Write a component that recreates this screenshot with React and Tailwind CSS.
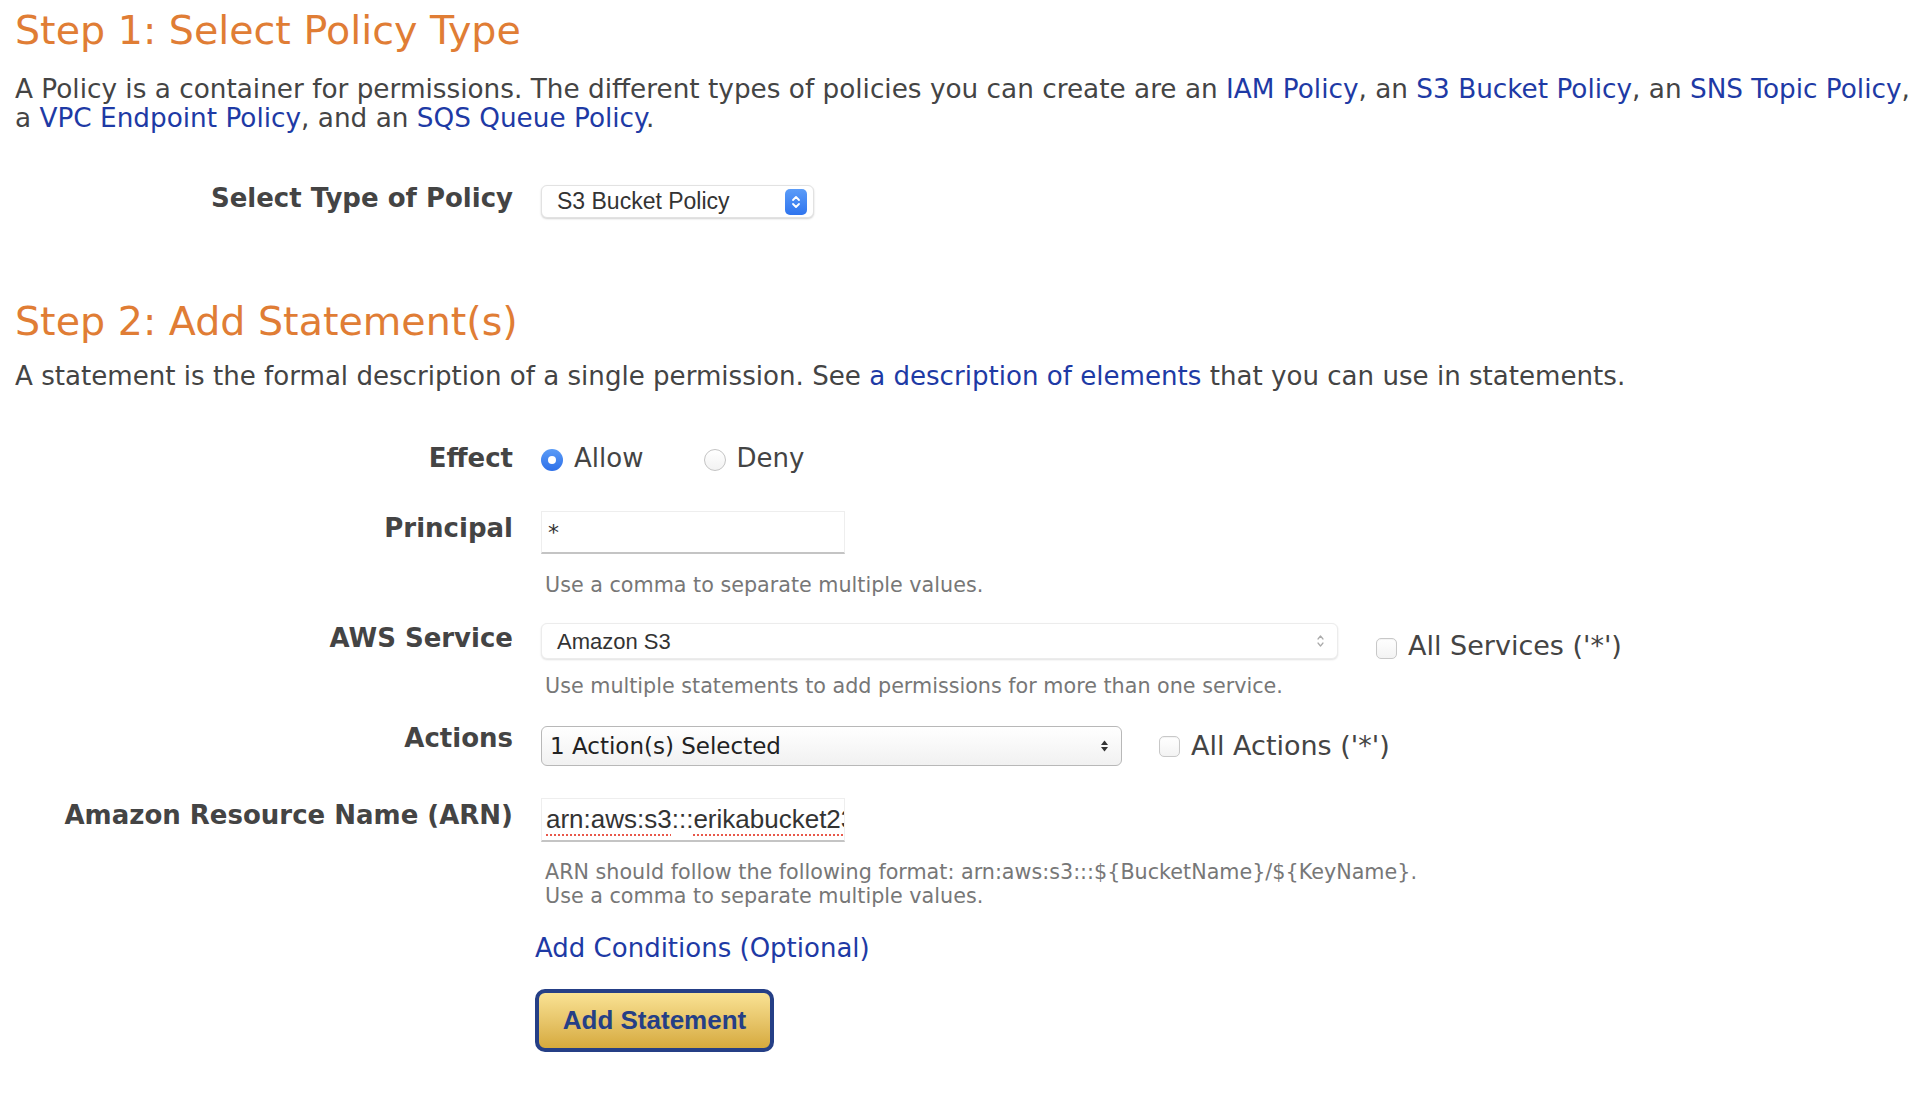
import React from 'react'

const labelCls = 'w-[498px] shrink-0 text-right font-bold text-[26px] leading-[26px] text-[#444]'
const helpCls = 'text-[20.7px] leading-[24px] text-[#777]'
const linkCls = 'text-[#1e3aa5]'

function Checkbox() {
  return <span className="inline-block w-[21px] h-[21px] rounded-[5px] border border-[#c8c8c8] bg-gradient-to-b from-white to-[#f3f3f3] shadow-[inset_0_1px_1px_rgba(0,0,0,0.05)]" />
}

function StepperBlue() {
  return (
    <span className="flex items-center justify-center w-[22px] h-[26px] rounded-[5px] bg-gradient-to-b from-[#5b9cf8] to-[#2f74ee]">
      <svg width="10" height="16" viewBox="0 0 10 16" fill="none" stroke="white" strokeWidth="1.8" strokeLinecap="round" strokeLinejoin="round">
        <path d="M2 6 L5 3 L8 6" />
        <path d="M2 10 L5 13 L8 10" />
      </svg>
    </span>
  )
}

export default function App() {
  return (
    <div className="min-h-screen bg-white px-[15px] pb-10 text-[#444]" style={{ fontFamily: '"DejaVu Sans", Verdana, sans-serif' }}>
      <h1 className="pt-[7px] text-[39.6px] leading-[47px] font-normal text-[#e07d35]">Step 1: Select Policy Type</h1>
      <p className="mt-[21px] text-[26.3px] leading-[29px]">
        A Policy is a container for permissions. The different types of policies you can create are an <a className={linkCls}>IAM Policy</a>, an <a className={linkCls}>S3 Bucket Policy</a>, an <a className={linkCls}>SNS Topic Policy</a>,<br />
        a <a className={linkCls}>VPC Endpoint Policy</a>, and an <a className={linkCls}>SQS Queue Policy</a>.
      </p>

      <div className="mt-[52px] flex items-start gap-[28px]">
        <div className={labelCls}>Select Type of Policy</div>
        <div className="flex items-center justify-between w-[273px] h-[33px] pl-[15px] pr-[6px] rounded-[6px] bg-white border border-[#e2e2e2] shadow-[0_1px_2px_rgba(0,0,0,0.18)] text-[23px] text-[#333]" style={{ fontFamily: '"Liberation Sans", Arial, sans-serif' }}>
          <span>S3 Bucket Policy</span>
          <StepperBlue />
        </div>
      </div>

      <h1 className="mt-[80px] text-[39.6px] leading-[47px] font-normal text-[#e07d35]">Step 2: Add Statement(s)</h1>
      <p className="mt-[17px] text-[26.1px] leading-[29px]">
        A statement is the formal description of a single permission. See <a className={linkCls}>a description of elements</a> that you can use in statements.
      </p>

      {/* Effect */}
      <div className="mt-[54px] flex items-start gap-[28px]">
        <div className={labelCls}>Effect</div>
        <div className="flex items-center h-[26px] text-[26px]">
          <span className="flex items-center justify-center w-[22px] h-[22px] rounded-full bg-gradient-to-b from-[#5a9bf7] to-[#2d6fe8] mt-[4px]">
            <span className="w-[8px] h-[8px] rounded-full bg-white" />
          </span>
          <span className="ml-[11px]">Allow</span>
          <span className="ml-[61px] w-[22px] h-[22px] rounded-full border border-[#c4c4c4] bg-gradient-to-b from-white to-[#f2f2f2] mt-[4px]" />
          <span className="ml-[10px]">Deny</span>
        </div>
      </div>

      {/* Principal */}
      <div className="mt-[40px] flex items-start gap-[28px]">
        <div className={labelCls + ' mt-[4px]'}>Principal</div>
        <div>
          <div className="w-[304px] h-[43px] flex items-center pl-[6px] border border-[#eeeeee] border-b-[#c4c4c4] border-b-2 text-[22px] text-[#333]">*</div>
          <div className={helpCls + ' mt-[19px] pl-[4px]'}>Use a comma to separate multiple values.</div>
        </div>
      </div>

      {/* AWS Service */}
      <div className="mt-[24px] flex items-start gap-[28px]">
        <div className={labelCls + ' mt-[4px]'}>AWS Service</div>
        <div>
          <div className="flex items-center">
            <div className="flex items-center justify-between w-[797px] h-[36px] pl-[15px] pr-[12px] rounded-[6px] bg-white border border-[#ececec] shadow-[0_1px_2px_rgba(0,0,0,0.12)] text-[22px] text-[#333]" style={{ fontFamily: '"Liberation Sans", Arial, sans-serif' }}>
              <span>Amazon S3</span>
              <svg width="9" height="16" viewBox="0 0 9 16" fill="none" stroke="#aaa" strokeWidth="1.2" strokeLinecap="round" strokeLinejoin="round">
                <path d="M2 6 L4.5 3 L7 6" />
                <path d="M2 10 L4.5 13 L7 10" />
              </svg>
            </div>
            <span className="ml-[38px] mt-[14px] flex"><Checkbox /></span>
            <span className="ml-[11px] mt-[10px] text-[27px] leading-[30px]">All Services ('*')</span>
          </div>
          <div className={helpCls + ' mt-[13px] pl-[4px]'}>Use multiple statements to add permissions for more than one service.</div>
        </div>
      </div>

      {/* Actions */}
      <div className="mt-[27px] flex items-start gap-[28px]">
        <div className={labelCls}>Actions</div>
        <div className="flex items-center mt-[1px]">
          <div className="flex items-center justify-between w-[581px] h-[40px] pl-[8px] pr-[12px] rounded-[6px] border border-[#b8b8b8] bg-gradient-to-b from-white to-[#f1f1f1] text-[23px] text-[#222]" style={{ fontFamily: '"DejaVu Sans", Tahoma, sans-serif' }}>
            <span>1 Action(s) Selected</span>
            <svg width="9" height="14" viewBox="0 0 9 14" fill="#333">
              <path d="M1 6 L4.5 1.5 L8 6 Z" />
              <path d="M1 8 L4.5 12.5 L8 8 Z" />
            </svg>
          </div>
          <span className="ml-[37px] flex"><Checkbox /></span>
          <span className="ml-[11px] text-[27px] leading-[30px]">All Actions ('*')</span>
        </div>
      </div>

      {/* ARN */}
      <div className="mt-[32px] flex items-start gap-[28px]">
        <div className={labelCls + ' mt-[4px]'}>Amazon Resource Name (ARN)</div>
        <div>
          <div className="w-[304px] h-[44px] flex items-center pl-[4px] overflow-hidden whitespace-nowrap border border-[#eeeeee] border-b-[#c4c4c4] border-b-2 text-[26px] text-[#333]" style={{ fontFamily: '"Liberation Sans", Arial, sans-serif' }}>
            <span className="underline decoration-dotted decoration-[#e8584a] decoration-2 underline-offset-[6px]">arn:aws:s3</span>
            <span>:::</span>
            <span className="underline decoration-dotted decoration-[#e8584a] decoration-2 underline-offset-[6px]">erikabucket23</span>
          </div>
          <div className={helpCls + ' mt-[18px] pl-[4px]'}>
            ARN should follow the following format: arn:aws:s3:::${'{'}BucketName{'}'}/${'{'}KeyName{'}'}.<br />
            Use a comma to separate multiple values.
          </div>
        </div>
      </div>

      <div className="ml-[520px] mt-[26px] text-[26px] leading-[29px]">
        <a className={linkCls}>Add Conditions (Optional)</a>
      </div>

      <button className="ml-[520px] mt-[26px] w-[239px] h-[63px] rounded-[10px] border-[4px] border-[#253f86] bg-gradient-to-b from-[#f9e293] to-[#d6aa3c] text-[26px] font-bold text-[#253f86]" style={{ fontFamily: '"Liberation Sans", Arial, sans-serif' }}>
        Add Statement
      </button>
    </div>
  )
}
